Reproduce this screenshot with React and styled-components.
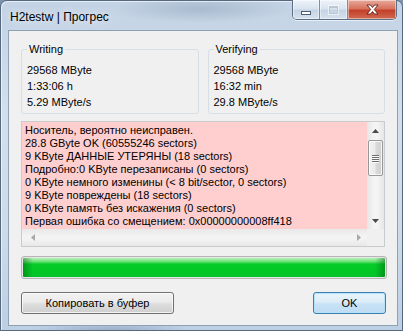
import React from 'react';
import styled, { createGlobalStyle } from 'styled-components';

const GlobalStyle = createGlobalStyle`
  html, body {
    margin: 0;
    padding: 0;
    background: #7d93ab;
  }
  body {
    font-family: "Liberation Sans", Arial, sans-serif;
    font-size: 11px;
    color: #000;
  }
`;

const Window = styled.div`
  width: 403px;
  height: 331px;
  box-sizing: border-box;
  display: flex;
  flex-direction: column;
  border: 1px solid #56697e;
  border-radius: 7px 7px 0 0;
  padding: 0 4px 4px 7px;
  background:
    radial-gradient(ellipse 90px 14px at 200px 8px, rgba(120, 140, 165, 0.35), transparent),
    radial-gradient(ellipse 80px 10px at 110px 330px, rgba(90, 110, 140, 0.35), transparent),
    linear-gradient(180deg, #c3d3e5 0%, #d3dfec 35%, #cddbe9 70%, #bccfe3 100%);
  box-shadow: inset 1px 1px 0 rgba(255, 255, 255, 0.6);
`;

const TitleBar = styled.div`
  height: 29px;
  display: flex;
  align-items: flex-start;
  justify-content: space-between;
`;

const Title = styled.div`
  font-family: "Liberation Sans", Arial, sans-serif;
  font-size: 12px;
  color: #000;
  margin: 9px 0 0 2px;
  text-shadow: 0 0 6px rgba(255, 255, 255, 0.9);
`;

const Caption = styled.div`
  display: flex;
  margin-top: -1px;
  margin-right: 1px;
  border: 1px solid #5d6f84;
  border-top: none;
  border-radius: 0 0 5px 5px;
  overflow: hidden;
  box-shadow: 0 1px 0 rgba(255, 255, 255, 0.6);
`;

const CapButton = styled.div`
  width: ${p => p.$w}px;
  height: 19px;
  display: flex;
  align-items: center;
  justify-content: center;
  border-left: ${p => (p.$first ? 'none' : '1px solid #7d8ea2')};
  background: ${p =>
    p.$close
      ? 'linear-gradient(180deg, #e9a99c 0%, #d7735f 45%, #c3402a 55%, #d0694f 100%)'
      : 'linear-gradient(180deg, #eef3f9 0%, #d9e4f0 45%, #c5d4e5 55%, #d6e2ee 100%)'};
  box-shadow: inset 0 0 0 1px rgba(255, 255, 255, 0.45);
`;

const MinGlyph = styled.div`
  width: 8px;
  height: 2px;
  margin-top: 6px;
  background: #fff;
  border: 1px solid #4f5f72;
`;

const MaxGlyph = styled.div`
  width: 7px;
  height: 5px;
  border: 1px solid #b9c6d4;
  border-top-width: 2px;
  box-shadow: 0 0 0 1px rgba(255, 255, 255, 0.6);
`;

const Client = styled.div`
  flex: 1;
  border: 1px solid #8ea0b4;
  background: #f0f0f0;
  padding: 0 12px 0 12px;
  display: flex;
  flex-direction: column;
`;

const GroupRow = styled.div`
  display: flex;
  gap: 9px;
  margin-top: 12px;
`;

const Group = styled.fieldset`
  flex: 1;
  min-width: 0;
  margin: 0;
  padding: 6px 5px 3px 5px;
  border: 1px solid #d5dfe5;
  border-radius: 3px;
  legend {
    padding: 0 2px;
    line-height: 13px;
  }
`;

const Line = styled.div`
  line-height: 16px;
  white-space: nowrap;
`;

const LogBox = styled.div`
  margin-top: 7px;
  height: 126px;
  box-sizing: border-box;
  border: 1px solid #c9cccf;
  display: grid;
  grid-template-columns: 1fr 17px;
  grid-template-rows: 1fr 17px;
  background: #f0f0f0;
`;

const LogText = styled.div`
  background: #ffcfcf;
  padding: 2px 0 0 3px;
  overflow: hidden;
  div {
    line-height: 13px;
    white-space: nowrap;
  }
`;

const VScroll = styled.div`
  display: flex;
  flex-direction: column;
  align-items: center;
  background: linear-gradient(90deg, #e6e6e6, #f4f4f4 40%, #f4f4f4 60%, #e6e6e6);
`;

const Arrow = styled.div`
  width: 17px;
  height: 17px;
  display: flex;
  align-items: center;
  justify-content: center;
  flex-shrink: 0;
`;

const Track = styled.div`
  flex: 1;
  width: 100%;
  display: flex;
  justify-content: center;
`;

const Thumb = styled.div`
  width: 15px;
  height: 36px;
  margin-top: 1px;
  box-sizing: border-box;
  border: 1px solid #979797;
  border-radius: 2px;
  background: linear-gradient(90deg, #f2f2f2 0%, #ebebeb 45%, #d9d9d9 55%, #cfcfcf 100%);
  box-shadow: inset 0 0 0 1px rgba(255, 255, 255, 0.8);
  display: flex;
  flex-direction: column;
  align-items: center;
  justify-content: center;
  gap: 1px;
  span {
    width: 7px;
    height: 1px;
    background: #6e6e6e;
    box-shadow: 0 1px 0 #fafafa;
  }
`;

const HScroll = styled.div`
  display: flex;
  justify-content: space-between;
  align-items: center;
  background: linear-gradient(180deg, #e8e8e8, #f3f3f3 40%, #f3f3f3 60%, #e8e8e8);
  padding: 0 0 0 2px;
`;

const Corner = styled.div`
  background: #f0f0f0;
`;

const Progress = styled.div`
  margin-top: 9px;
  margin-right: -2px;
  height: 23px;
  box-sizing: border-box;
  border: 1px solid #b5b5b5;
  border-radius: 3px;
  padding: 1px;
  background: #e6e6e6;
`;

const Fill = styled.div`
  height: 100%;
  border-radius: 1px;
  background:
    linear-gradient(90deg, rgba(0, 90, 10, 0.45) 0px, transparent 10px, transparent calc(100% - 10px), rgba(0, 90, 10, 0.45) 100%),
    linear-gradient(180deg, #b8f3b8 0%, #6fe27a 18%, #06cc2a 32%, #02c826 70%, #04c22a 100%);
`;

const ButtonRow = styled.div`
  margin-top: 13px;
  margin-right: -1px;
  display: flex;
  justify-content: space-between;
`;

const Button = styled.button`
  width: ${p => p.$w}px;
  height: 22px;
  padding: 0;
  font-family: "Liberation Sans", Arial, sans-serif;
  font-size: 11px;
  color: #000;
  border-radius: 3px;
  border: 1px solid ${p => (p.$default ? '#3c7fb1' : '#707070')};
  background: ${p =>
    p.$default
      ? 'linear-gradient(180deg, #eaf5fc 0%, #dcecf8 45%, #c8e2f6 55%, #bfdcf4 100%)'
      : 'linear-gradient(180deg, #f2f2f2 0%, #ebebeb 45%, #dddddd 55%, #cfcfcf 100%)'};
  box-shadow: inset 0 0 0 1px ${p => (p.$default ? 'rgba(180, 225, 250, 0.9)' : 'rgba(255, 255, 255, 0.75)')};
`;

const Tri = ({ dir }) => {
  const pts = {
    up: '0,4 3.5,0 7,4',
    down: '0,0 7,0 3.5,4',
    left: '4,0 4,7 0,3.5',
    right: '0,0 0,7 4,3.5',
  }[dir];
  const horiz = dir === 'left' || dir === 'right';
  return (
    <svg width={horiz ? 4 : 7} height={horiz ? 7 : 4} viewBox={horiz ? '0 0 4 7' : '0 0 7 4'}>
      <polygon points={pts} fill={horiz ? '#a8a8a8' : '#4a4a4a'} />
    </svg>
  );
};

const CloseGlyph = () => (
  <svg width="13" height="11" viewBox="0 0 13 11">
    <path
      d="M1 1 H4.5 L6.5 3.5 L8.5 1 H12 L8.3 5.5 L12 10 H8.5 L6.5 7.5 L4.5 10 H1 L4.7 5.5 Z"
      fill="#fff"
      stroke="#5b1f16"
      strokeWidth="0.9"
      strokeLinejoin="round"
    />
  </svg>
);

const log = [
  'Носитель, вероятно неисправен.',
  '28.8 GByte OK (60555246 sectors)',
  '9 KByte ДАННЫЕ УТЕРЯНЫ (18 sectors)',
  'Подробно:0 KByte перезаписаны (0 sectors)',
  '0 KByte немного изменины (< 8 bit/sector, 0 sectors)',
  '9 KByte повреждены (18 sectors)',
  '0 KByte память без искажения (0 sectors)',
  'Первая ошибка со смещением: 0x00000000008ff418',
];

export default function App() {
  return (
    <>
      <GlobalStyle />
      <Window>
        <TitleBar>
          <Title>H2testw | Прогрес</Title>
          <Caption>
            <CapButton $w={26} $first>
              <MinGlyph />
            </CapButton>
            <CapButton $w={27}>
              <MaxGlyph />
            </CapButton>
            <CapButton $w={48} $close>
              <CloseGlyph />
            </CapButton>
          </Caption>
        </TitleBar>
        <Client>
          <GroupRow>
            <Group>
              <legend>Writing</legend>
              <Line>29568 MByte</Line>
              <Line>1:33:06 h</Line>
              <Line>5.29 MByte/s</Line>
            </Group>
            <Group>
              <legend>Verifying</legend>
              <Line>29568 MByte</Line>
              <Line>16:32 min</Line>
              <Line>29.8 MByte/s</Line>
            </Group>
          </GroupRow>
          <LogBox>
            <LogText>
              {log.map((l, i) => (
                <div key={i}>{l}</div>
              ))}
            </LogText>
            <VScroll>
              <Arrow><Tri dir="up" /></Arrow>
              <Track>
                <Thumb>
                  <span />
                  <span />
                  <span />
                  <span />
                </Thumb>
              </Track>
              <Arrow><Tri dir="down" /></Arrow>
            </VScroll>
            <HScroll>
              <Arrow><Tri dir="left" /></Arrow>
              <Arrow><Tri dir="right" /></Arrow>
            </HScroll>
            <Corner />
          </LogBox>
          <Progress>
            <Fill />
          </Progress>
          <ButtonRow>
            <Button $w={153}>Копировать в буфер</Button>
            <Button $w={73} $default>OK</Button>
          </ButtonRow>
        </Client>
      </Window>
    </>
  );
}
